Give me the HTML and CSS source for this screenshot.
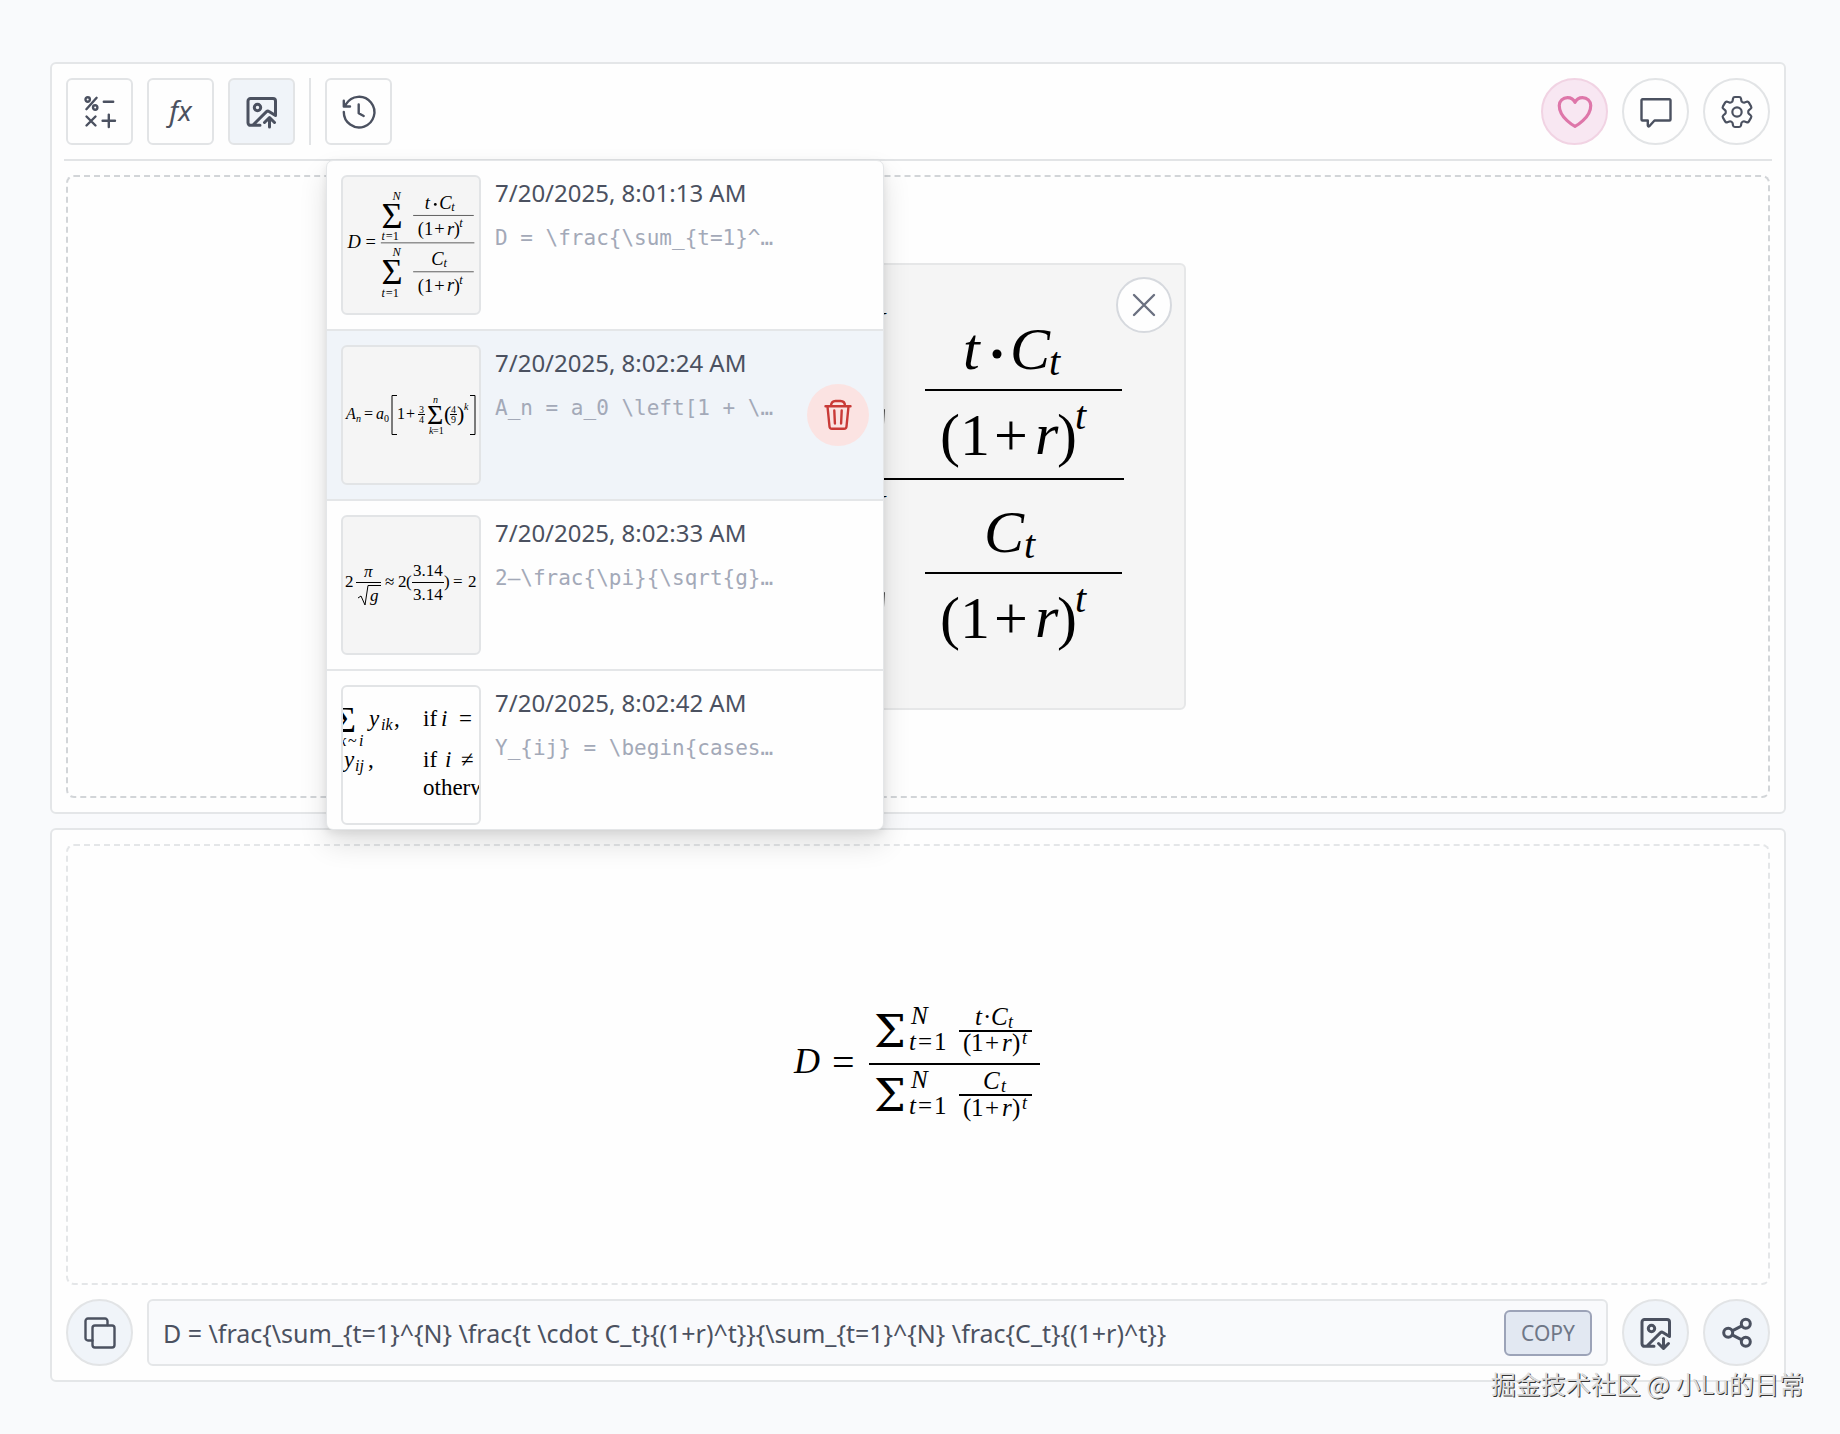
FILE: index.html
```html
<!DOCTYPE html>
<html lang="en">
<head>
<meta charset="utf-8">
<meta name="viewport" content="width=device-width, initial-scale=1">
<title>Formula editor</title>
<link rel="stylesheet" href="styles.css">
</head>
<body>
<main class="page">
  <section class="panel">
    <header class="toolbar">
      <button class="tool" type="button" aria-label="Symbols"><svg class="icon" viewBox="0 0 32 32"><circle cx="3.7" cy="3.5" r="2.2"/><circle cx="11.2" cy="11.5" r="2.2"/><path d="M12.6 1.8L2.4 13.2M19.8 5.8h9.4M2.5 20.5l9 9M11.5 20.5l-9 9M24.8 18.6v12.4M18.6 24.8H31"/></svg></button>
      <button class="tool fx" type="button" aria-label="Functions">fx</button>
      <button class="tool active" type="button" aria-label="Upload image"><svg class="icon bold" viewBox="0 0 32 32"><path d="M14 29.3H4.5a2.5 2.5 0 0 1-2.500-2.500V5a2.500 2.500 0 0 1 2.500-2.500H27a2.500 2.500 0 0 1 2.500 2.500V19.500L23 15.500a2 2 0 0 0-2.500.2L7 29M23.500 31V22M18.500 26.500l5-5 5 5"/><circle cx="11.500" cy="11.500" r="3.200"/></svg></button>
      <span class="divider"></span>
      <div class="history">
        <button class="tool" type="button" aria-label="History" aria-expanded="true"><svg class="icon" viewBox="0 0 32 32"><path d="M.8 16A15.300 15.300 0 1 0 3 8.200L1.500 10.500M.8 4.800v5.700H7M15.700 8.500v8.700l5 2.800"/></svg></button>
        <ul class="popup">
          <li class="entry">
            <svg class="thumb grey" viewBox="45 0 442 442" role="img" aria-label="Duration formula"><use href="#duration"/></svg>
            <div class="meta"><time class="date">7/20/2025, 8:01:13 AM</time><code class="code">D = \frac{\sum_{t=1}^…</code></div>
          </li>
          <li class="entry selected">
            <svg class="thumb grey" viewBox="0 0 136 136" role="img" aria-label="Series formula">
              <g class="math it s16"><text x="3" y="72">A</text><text x="33" y="72">a</text></g>
              <g class="math s16"><text x="21" y="72">=</text><text x="54" y="72">1</text><text x="63" y="72">+</text></g>
              <g class="math it s10"><text x="13" y="75">n</text><text x="90" y="56">n</text><text x="121" y="63">k</text><text x="86" y="87">k</text></g>
              <g class="math s10"><text x="41" y="75">0</text><text x="76" y="66">3</text><text x="76" y="76">4</text><text x="108" y="66">4</text><text x="108" y="76">9</text><text x="90" y="87">=1</text></g>
              <g class="math s22"><text x="101" y="74">(</text><text x="114" y="74">)</text></g>
              <g class="math s28"><text x="84" y="77">Σ</text></g>
              <path class="rule thin" d="M54 48.500H49V87.500H54M127 48.500H132V87.500H127M75 67.500H82M107 67.500H114"/>
            </svg>
            <div class="meta"><time class="date">7/20/2025, 8:02:24 AM</time><code class="code">A_n = a_0 \left[1 + \…</code></div>
            <button class="delete" type="button" aria-label="Delete"><svg class="icon" viewBox="0 0 32 32"><path d="M3.500 7.200h25M9 7c0-3 1.500-5 4.500-5h5C21.500 2 23 4 23 7M5.500 7.500L7.500 27.500a2.500 2.500 0 0 0 2.500 2.300h12a2.500 2.500 0 0 0 2.500-2.300l2-20M12.300 11.500l.6 13M19.700 11.500l-.6 13"/></svg></button>
          </li>
          <li class="entry">
            <svg class="thumb grey" viewBox="0 0 136 136" role="img" aria-label="Pendulum formula">
              <g class="math s17"><text x="2" y="70">2</text><text x="42" y="70">≈</text><text x="55" y="70">2</text><text x="63" y="70">(</text><text x="70" y="59">3.14</text><text x="70" y="83">3.14</text><text x="101" y="70">)</text><text x="110" y="70">=</text><text x="125" y="70">2</text></g>
              <g class="math it s17"><text x="21" y="60">π</text><text x="27" y="84">g</text></g>
              <path class="rule thin" d="M13 65.500H38M69 65.500H101M15 81l3-2 4 9L25 68.500H38"/>
            </svg>
            <div class="meta"><time class="date">7/20/2025, 8:02:33 AM</time><code class="code">2–\frac{\pi}{\sqrt{g}…</code></div>
          </li>
          <li class="entry">
            <svg class="thumb" viewBox="0 0 136 136" role="img" aria-label="Cases formula">
              <g class="math s36"><text x="-8" y="45">Σ</text></g>
              <g class="math it s23"><text x="26" y="39">y</text><text x="98" y="39">i</text><text x="1" y="80">y</text><text x="102" y="80">i</text></g>
              <g class="math it s16"><text x="38" y="43">ik</text><text x="12" y="84">ij</text><text x="-4" y="59">k</text><text x="16" y="59">i</text></g>
              <g class="math s16"><text x="5" y="59">~</text></g>
              <g class="math s23"><text x="51" y="39">,</text><text x="25" y="80">,</text><text x="80" y="39">if</text><text x="116" y="39">=</text><text x="80" y="80">if</text><text x="118" y="80">≠</text><text x="80" y="108">otherwise</text></g>
            </svg>
            <div class="meta"><time class="date">7/20/2025, 8:02:42 AM</time><code class="code">Y_{ij} = \begin{cases…</code></div>
          </li>
        </ul>
      </div>
      <div class="actions">
        <button class="round pink" type="button" aria-label="Donate"><svg class="icon heart" viewBox="0 0 24 24"><path d="M21 8.250c0-2.485-2.099-4.500-4.688-4.500-1.935 0-3.597 1.126-4.312 2.733-.715-1.607-2.377-2.733-4.313-2.733C5.100 3.750 3 5.765 3 8.250c0 7.220 9 12 9 12s9-4.780 9-12z"/></svg></button>
        <button class="round" type="button" aria-label="Feedback"><svg class="icon" viewBox="0 0 32 32"><path d="M2.500 3.200h27a1 1 0 0 1 1 1v19.300a1 1 0 0 1-1 1H14.500L9.500 30q-1.500 1.200-1.700-.6V24.500H2.500a1 1 0 0 1-1-1V4.200a1 1 0 0 1 1-1z"/></svg></button>
        <button class="round" type="button" aria-label="Settings"><svg class="icon gear" viewBox="0 0 24 24"><path d="M9.594 3.940c.09-.542.56-.94 1.110-.94h2.593c.55 0 1.020.398 1.110.94l.213 1.281c.063.374.313.686.645.87.074.04.147.083.22.127.325.196.72.257 1.075.124l1.217-.456a1.125 1.125 0 0 1 1.370.49l1.296 2.247a1.125 1.125 0 0 1-.26 1.431l-1.003.827c-.293.241-.438.613-.43.992a7.723 7.723 0 0 1 0 .255c-.008.378.137.75.43.991l1.004.827c.424.35.534.955.26 1.430l-1.298 2.247a1.125 1.125 0 0 1-1.369.491l-1.217-.456c-.355-.133-.75-.072-1.076.124a6.470 6.470 0 0 1-.22.128c-.331.183-.581.495-.644.869l-.213 1.281c-.09.543-.56.94-1.110.94h-2.594c-.55 0-1.019-.398-1.110-.94l-.213-1.281c-.062-.374-.312-.686-.644-.87a6.520 6.520 0 0 1-.22-.127c-.325-.196-.72-.257-1.076-.124l-1.217.456a1.125 1.125 0 0 1-1.369-.49l-1.297-2.247a1.125 1.125 0 0 1 .26-1.431l1.004-.827c.292-.24.437-.613.43-.991a6.932 6.932 0 0 1 0-.255c.007-.38-.138-.751-.43-.992l-1.004-.827a1.125 1.125 0 0 1-.26-1.430l1.297-2.247a1.125 1.125 0 0 1 1.370-.491l1.216.456c.356.133.751.072 1.076-.124.072-.044.146-.086.22-.128.332-.183.582-.495.644-.869l.214-1.280Z"/><circle cx="12" cy="12" r="2.800"/></svg></button>
      </div>
    </header>
    <div class="dropzone">
      <figure class="preview">
        <svg class="preview-image" viewBox="0 0 532 443" role="img" aria-label="Uploaded formula">
          <g id="duration">
            <g class="math it s60">
              <text x="60" y="231">D</text>
              <text x="311" y="104">t</text><text x="358" y="104">C</text>
              <text x="383" y="189">r</text><text x="332" y="287">C</text><text x="383" y="372">r</text>
            </g>
            <g class="math s60">
              <text x="118" y="231">=</text>
              <text x="288" y="190">(</text><text x="308" y="190">1</text><text x="342" y="190">+</text><text x="405" y="190">)</text>
              <text x="288" y="373">(</text><text x="308" y="373">1</text><text x="342" y="373">+</text><text x="405" y="373">)</text>
            </g>
            <g class="math it s40">
              <text x="206" y="74">N</text><text x="170" y="206">t</text>
              <text x="206" y="257">N</text><text x="170" y="390">t</text>
              <text x="397" y="110">t</text><text x="423" y="164">t</text>
              <text x="372" y="293">t</text><text x="423" y="347">t</text>
            </g>
            <g class="math s40"><text x="184" y="206">=1</text><text x="184" y="390">=1</text></g>
            <g class="math s118"><text x="170" y="166">Σ</text><text x="170" y="349">Σ</text></g>
            <circle cx="345" cy="89" r="4.5"/>
            <path class="rule" d="M168 214H472M273 125H470M273 308H470"/>
          </g>
        </svg>
        <button class="close" type="button" aria-label="Remove image"><svg class="icon" viewBox="0 0 32 32"><path d="M6 6l20 20M26 6L6 26"/></svg></button>
      </figure>
    </div>
  </section>

  <section class="panel">
    <div class="result">
      <svg class="result-image" viewBox="0 0 280 149" role="img" aria-label="Rendered formula">
        <g class="math it s36"><text x="16" y="83">D</text></g>
        <g class="math s40"><text x="54" y="86">=</text></g>
        <g class="math sum"><text x="96" y="57">Σ</text><text x="96" y="121">Σ</text></g>
        <g class="math it s25">
          <text x="133" y="34">N</text><text x="131" y="60">t</text><text x="133" y="98">N</text><text x="131" y="124">t</text>
          <text x="197" y="35">t</text><text x="213" y="35">C</text><text x="205" y="99">C</text>
          <text x="224" y="61">r</text><text x="224" y="126">r</text>
        </g>
        <g class="math s25">
          <text x="140" y="60">=</text><text x="156" y="60">1</text><text x="140" y="124">=</text><text x="156" y="124">1</text>
          <text x="205" y="35">·</text>
          <text x="185" y="61">(</text><text x="193" y="61">1</text><text x="207" y="61">+</text><text x="234" y="61">)</text>
          <text x="185" y="126">(</text><text x="193" y="126">1</text><text x="207" y="126">+</text><text x="234" y="126">)</text>
        </g>
        <g class="math it s18"><text x="230" y="38">t</text><text x="244" y="54">t</text><text x="223" y="102">t</text><text x="244" y="119">t</text></g>
        <path class="rule" d="M91 74H262M181 41H254M181 105H254"/>
      </svg>
    </div>
    <div class="bar">
      <button class="round tint" type="button" aria-label="Copy image"><svg class="icon" viewBox="0 0 32 32"><path d="M8.500 23.500H4A2.500 2.500 0 0 1 1.500 21V4A2.500 2.500 0 0 1 4 1.500H21A2.500 2.500 0 0 1 23.500 4V8"/><rect x="8.500" y="8.500" width="22" height="22" rx="2.500"/></svg></button>
      <div class="field">
        <input class="latex" type="text" aria-label="LaTeX" readonly value="D = \frac{\sum_{t=1}^{N} \frac{t \cdot C_t}{(1+r)^t}}{\sum_{t=1}^{N} \frac{C_t}{(1+r)^t}}">
        <button class="copy" type="button">COPY</button>
      </div>
      <button class="round tint" type="button" aria-label="Download image"><svg class="icon bold" viewBox="0 0 32 32"><path d="M14 29.300H4.500A2.500 2.500 0 0 1 2 26.800V5a2.500 2.500 0 0 1 2.500-2.500H27a2.500 2.500 0 0 1 2.500 2.500V19.500L23 15.500a2 2 0 0 0-2.500.2L7 29M23.500 21.500v9M18.500 26.500l5 5 5-5"/><circle cx="11.500" cy="11.500" r="3.200"/></svg></button>
      <button class="round tint" type="button" aria-label="Share"><svg class="icon bold" viewBox="0 0 32 32"><circle cx="24.800" cy="6.800" r="4.500"/><circle cx="7.200" cy="15.800" r="4.500"/><circle cx="24.800" cy="24.800" r="4.500"/><path d="M11.200 13.800l9.600-5M11.200 17.800l9.600 5"/></svg></button>
    </div>
  </section>
</main>
<p class="watermark">掘金技术社区 @ 小Lu的日常</p>
</body>
</html>
```
FILE: styles.css
```css
* { box-sizing: border-box; }

body {
  position: relative;
  margin: 0;
  background: #f9fafc;
  color: #4b5160;
  font-family: "Noto Sans", sans-serif;
  font-size: 24px;
}

button { font: inherit; color: inherit; padding: 0; cursor: pointer; }

.page {
  display: flex;
  flex-direction: column;
  gap: 14px;
  padding: 62px 54px 52px 50px;
}

.panel {
  background: #fefefe;
  border: 2px solid #e4e6e8;
  border-radius: 6px;
}

.toolbar {
  display: flex;
  gap: 14px;
  margin: 0 12px;
  padding: 14px 2px;
  border-bottom: 2px solid #e2e4e6;
}

.tool, .round {
  display: flex;
  flex: none;
  align-items: center;
  justify-content: center;
  width: 67px;
  height: 67px;
  background: #fefefe;
  border: 2px solid #e2e4e6;
  border-radius: 6px;
}

.round { border-radius: 50%; }
.active, .tint { background: #f0f4f9; }
.fx { font-size: 28px; font-style: italic; line-height: 32px; padding-bottom: 3px; }
.pink { background: #f8e7f2; border-color: #f1d3e3; color: #de76a9; }

.icon {
  width: 32px;
  height: 32px;
  overflow: visible;
  fill: none;
  stroke: currentColor;
  stroke-width: 2.4;
  stroke-linecap: round;
  stroke-linejoin: round;
}

.bold { stroke-width: 3; }
.heart { width: 42px; height: 42px; stroke-width: 1.8; }
.gear { width: 40px; height: 40px; stroke-width: 1.3; }

.divider { width: 2px; background: #e2e4e6; }
.actions { display: flex; gap: 14px; margin-left: auto; }
.history { position: relative; }

.popup {
  position: absolute;
  z-index: 2;
  top: calc(100% + 15px);
  left: 1px;
  width: 558px;
  max-height: 670px;
  margin: 0;
  padding: 0;
  overflow: hidden;
  list-style: none;
  background: #fefefe;
  border: 1px solid #e4e6e8;
  border-radius: 7px;
  box-shadow: 0 14px 28px rgba(0, 0, 0, .12), 0 3px 8px rgba(0, 0, 0, .08);
}

.entry {
  display: flex;
  gap: 14px;
  padding: 14px;
  border-bottom: 2px solid #e4e6e8;
}

.selected { background: #f0f4f9; }

.thumb {
  flex: none;
  width: 140px;
  height: 140px;
  border: 2px solid #e2e4e6;
  border-radius: 6px;
  overflow: hidden;
}

.grey { background: #f5f5f5; }

.meta {
  display: flex;
  flex: none;
  flex-direction: column;
  gap: 12px;
  width: 280px;
}

.date { line-height: 36px; white-space: nowrap; }

.code {
  color: #a3a9b8;
  font-family: "DejaVu Sans Mono", monospace;
  font-size: 21px;
  line-height: 30px;
  white-space: pre;
}

.delete {
  display: flex;
  flex: none;
  align-items: center;
  align-self: center;
  justify-content: center;
  width: 62px;
  height: 62px;
  margin-left: auto;
  background: #fbe3e2;
  border: 0;
  border-radius: 50%;
  color: #c93a37;
}

.dropzone, .result {
  display: flex;
  align-items: center;
  justify-content: center;
  margin: 14px;
  border: 2px dashed #d2d5d8;
  border-radius: 8px;
}

.dropzone { padding: 86px 0; }
.result { padding: 144px 0; border-color: #e4e6e8; }

.preview {
  position: relative;
  margin: 0;
  background: #f5f5f5;
  border: 2px solid #e6e7e8;
  border-radius: 6px;
}

.preview-image { display: block; width: 532px; height: 443px; }
.result-image { width: 280px; height: 149px; }

.close {
  position: absolute;
  top: 12px;
  right: 12px;
  display: flex;
  align-items: center;
  justify-content: center;
  width: 56px;
  height: 56px;
  background: #fefefe;
  border: 2px solid #d6d9de;
  border-radius: 50%;
  color: #6b7080;
}

.bar { display: flex; gap: 14px; margin: 14px; }

.field {
  display: flex;
  flex: 1;
  align-items: center;
  min-width: 0;
  padding: 0 14px;
  background: #f9fafc;
  border: 2px solid #e4e6e8;
  border-radius: 6px;
}

.latex {
  flex: 1;
  min-width: 0;
  padding: 0;
  background: none;
  border: 0;
  outline: 0;
  color: inherit;
  font: inherit;
  font-size: 25px;
}

.copy {
  width: 88px;
  height: 46px;
  background: #e2e8f2;
  border: 2px solid #9ca3b8;
  border-radius: 6px;
  color: #6f7787;
  font-size: 21px;
}

.math { fill: #000; font-family: "Liberation Serif", serif; }
.it { font-style: italic; }
.s10 { font-size: 10px; }
.s16 { font-size: 16px; }
.s17 { font-size: 17px; }
.s18 { font-size: 18px; }
.s22 { font-size: 22px; }
.s23 { font-size: 23px; }
.s25 { font-size: 25px; }
.s28 { font-size: 28px; }
.s36 { font-size: 36px; }
.s40 { font-size: 40px; }
.s60 { font-size: 60px; }
.s118 { font-size: 118px; }
.sum { font-family: "DejaVu Serif", serif; font-size: 45px; }
.rule { fill: none; stroke: #000; stroke-width: 2; }
.thin { stroke-width: 1; }

.watermark {
  position: absolute;
  right: 36px;
  bottom: 32px;
  margin: 0;
  color: #dcdcdc;
  font-family: "Noto Sans CJK SC", sans-serif;
  font-size: 25px;
  line-height: 38px;
  text-shadow: 1px 1px 0 #333;
}
```
